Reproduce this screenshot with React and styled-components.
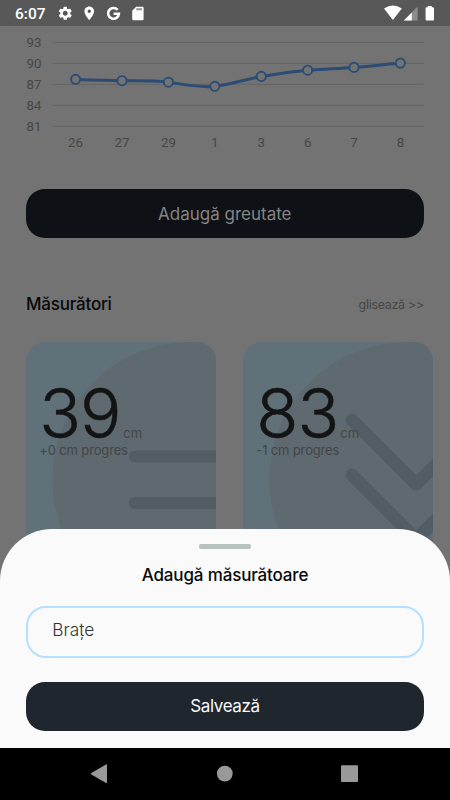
import React from "react";
import { MdLocationOn, MdSettings } from "react-icons/md";
import styled, { createGlobalStyle } from "styled-components";

const weights = [
  { day: "26", x: 75.6, y: 53.3 },
  { day: "27", x: 122, y: 54.7 },
  { day: "29", x: 168.4, y: 56.2 },
  { day: "1", x: 214.8, y: 60.3 },
  { day: "3", x: 261.3, y: 50.4 },
  { day: "6", x: 307.7, y: 44.2 },
  { day: "7", x: 354, y: 41.4 },
  { day: "8", x: 400.4, y: 37.1 },
];

const ticks = [93, 90, 87, 84, 81];

const measurements = [
  { value: "39", progress: "+0 cm progres", trend: "equal" },
  { value: "83", progress: "-1 cm progres", trend: "down" },
];

function StatusBar() {
  return (
    <Status>
      <Clock>6:07</Clock>
      <StatusIcons>
        <MdSettings size={16.5} />
        <MdLocationOn size={16.5} />
        <svg width="15" height="15" viewBox="0 0 15 15">
          <path
            d="M11.6 3.8A5.4 5.4 0 1 0 12.9 7.7H7.6"
            fill="none"
            stroke="#fff"
            strokeWidth="2.6"
          />
        </svg>
        <svg width="12" height="15" viewBox="0 0 12 15">
          <path
            d="M4.2 0.7H10.4Q11.6 0.7 11.6 1.9V13Q11.6 14.2 10.4 14.2H1.4Q0.2 14.2 0.2 13V4.7Z"
            fill="#fff"
          />
          <path d="M4.3 2.2H10V4.3H4.3Z" fill="#969696" />
        </svg>
      </StatusIcons>
      <SystemIcons width="50" height="16" viewBox="0 0 50 16">
        <path d="M0 3.6Q8.9 -2.8 17.8 3.6L8.9 15Z" fill="#fff" />
        <path d="M33.6 1.5V15.5H19.8Z" fill="#8d8d8d" />
        <path d="M27.8 7.4V15.5H19.8Z" fill="#fff" />
        <path
          d="M43.8 1H47.8V2.2H49Q50 2.2 50 3.2V14.5Q50 15.5 49 15.5H42.6Q41.6 15.5 41.6 14.5V3.2Q41.6 2.2 42.6 2.2H43.8Z"
          fill="#fff"
        />
      </SystemIcons>
    </Status>
  );
}

function WeightChart() {
  return (
    <Chart width="450" height="134" viewBox="0 0 450 134">
      {ticks.map((tick, i) => (
        <g key={tick}>
          <line x1="52.5" x2="423.5" y1={16.3 + i * 21} y2={16.3 + i * 21} />
          <text x="34" y={20.6 + i * 21}>
            {tick}
          </text>
        </g>
      ))}
      <path d="M75.6 53.3C91 54.3 106.5 54.4 122 54.7S153 54.2 168.4 56.2S199.4 62 214.8 60.3S245.8 53.2 261.3 50.4S292.2 45.5 307.7 44.2S338.5 42.6 354 41.4S385 38.5 400.4 37.1" />
      {weights.map((item) => (
        <g key={item.day}>
          <circle cx={item.x} cy={item.y} r="4.6" />
          <text x={item.x} y="121.3">
            {item.day}
          </text>
        </g>
      ))}
    </Chart>
  );
}

function MeasureCard({ value, progress, trend }) {
  return (
    <Card>
      <CardArt width="190" height="260" viewBox="0 0 190 260">
        <circle cx="164.5" cy="138" r="138" fill="#5e6a6f" />
        <g
          fill="none"
          stroke="#515d62"
          strokeLinecap="round"
          strokeLinejoin="round"
        >
          {trend === "equal" ? (
            <path d="M108.8 114.5H220M108.8 161H220" strokeWidth="11.8" />
          ) : (
            <path
              d="M109 78L173.2 142.2L237.4 78M109 133L173.2 197.2L237.4 133"
              strokeWidth="12.8"
            />
          )}
        </g>
      </CardArt>
      <Reading>
        <Value>{value}</Value>
        <Unit>cm</Unit>
      </Reading>
      <Progress>{progress}</Progress>
    </Card>
  );
}

function App() {
  return (
    <Phone>
      <GlobalStyle />
      <StatusBar />
      <Screen>
        <WeightChart />
        <AddButton>Adaugă greutate</AddButton>
        <SectionHeader>
          <SectionTitle>Măsurători</SectionTitle>
          <SwipeHint>glisează &gt;&gt;</SwipeHint>
        </SectionHeader>
        <CardRow>
          {measurements.map((item) => (
            <MeasureCard key={item.value} {...item} />
          ))}
        </CardRow>
      </Screen>
      <Sheet>
        <Handle />
        <SheetTitle>Adaugă măsurătoare</SheetTitle>
        <Field type="text" defaultValue="Brațe" />
        <SaveButton>Salvează</SaveButton>
      </Sheet>
      <NavBar>
        <svg width="450" height="52" viewBox="0 0 450 52" fill="#999">
          <path d="M91.3 25L106 16.5Q107 16 107 17V34Q107 35.5 106 34.9L91.3 26.5Q90.5 25.8 91.3 25Z" />
          <circle cx="224.8" cy="25.6" r="7.9" />
          <rect x="341" y="17.3" width="17" height="16.8" rx="1" />
        </svg>
      </NavBar>
    </Phone>
  );
}

export default App;

const GlobalStyle = createGlobalStyle`
  * {
    box-sizing: border-box;
  }
  body {
    margin: 0;
    overflow: hidden;
  }
`;

const Phone = styled.div`
  position: relative;
  display: flex;
  flex-direction: column;
  width: 450px;
  height: 800px;
  overflow: hidden;
  background-color: #737373;
  font-family: Inter, "Open Sans", sans-serif;
`;

const Status = styled.header`
  flex: none;
  display: flex;
  align-items: center;
  height: 26px;
  padding: 0 16px 0 15px;
  color: #fff;
  background-color: #585858;
`;

const Clock = styled.span`
  width: 42px;
  padding-top: 2px;
  font: 500 15.5px/26px Roboto, sans-serif;
`;

const StatusIcons = styled.div`
  display: flex;
  align-items: center;
  gap: 7.8px;
  padding-top: 1px;
  svg:last-child {
    margin-left: 4px;
  }
`;

const SystemIcons = styled.svg`
  margin-left: auto;
`;

const Screen = styled.main`
  flex: 1;
  display: flex;
  flex-direction: column;
  min-height: 0;
  overflow: hidden;
`;

const Chart = styled.svg`
  flex: none;
  line {
    stroke: #636363;
    stroke-width: 1;
  }
  path {
    fill: none;
    stroke: #2b4d75;
    stroke-width: 3;
  }
  circle {
    fill: #737373;
    stroke: #2b4d75;
    stroke-width: 1.9;
  }
  text {
    fill: #464646;
    font: 400 13.3px Roboto, sans-serif;
    text-anchor: middle;
  }
`;

const Button = styled.button`
  flex: none;
  width: 397.5px;
  height: 49px;
  padding: 1px 0 0;
  border: 0;
  border-radius: 19px;
  font-family: inherit;
  font-size: 17px;
  font-weight: 400;
`;

const AddButton = styled(Button)`
  margin: 29px 0 0 26px;
  color: #858585;
  background-color: #0e1115;
`;

const SaveButton = styled(Button)`
  margin-top: 24px;
  padding: 0;
  letter-spacing: -0.35px;
  color: #fafafa;
  background-color: #1f262e;
`;

const SectionHeader = styled.div`
  flex: none;
  display: flex;
  align-items: center;
  justify-content: space-between;
  height: 24px;
  margin: 54px 26px 0;
`;

const SectionTitle = styled.h2`
  margin: 0;
  color: #080808;
  font-size: 17px;
  font-weight: 500;
  letter-spacing: -0.2px;
`;

const SwipeHint = styled.span`
  color: #464646;
  font-size: 12.5px;
  letter-spacing: -0.3px;
`;

const CardRow = styled.div`
  display: flex;
  gap: 27px;
  padding: 26px 0 0 26.3px;
`;

const Card = styled.article`
  position: relative;
  flex: none;
  width: 190px;
  height: 260px;
  padding: 32px 0 0 13px;
  border-radius: 19px;
  overflow: hidden;
  background-color: #60717a;
`;

const CardArt = styled.svg`
  position: absolute;
  top: 0;
  left: 0;
`;

const Reading = styled.div`
  position: relative;
  display: flex;
  align-items: baseline;
  height: 68px;
  line-height: 78px;
`;

const Value = styled.span`
  width: 84px;
  color: #141414;
  font-size: 69px;
  font-weight: 300;
  letter-spacing: -1px;
  -webkit-text-stroke: 0.6px #141414;
`;

const Unit = styled.span`
  color: #464646;
  font-size: 13px;
  line-height: 16px;
`;

const Progress = styled.div`
  position: relative;
  color: #434648;
  font-size: 13px;
  letter-spacing: -0.15px;
  line-height: 17px;
`;

const Sheet = styled.section`
  position: absolute;
  right: 0;
  bottom: 52px;
  left: 0;
  display: flex;
  flex-direction: column;
  align-items: center;
  height: 219.5px;
  border-radius: 52px 52px 0 0;
  background-color: #fafafa;
`;

const Handle = styled.div`
  flex: none;
  width: 52.5px;
  height: 4.5px;
  margin-top: 15.5px;
  border-radius: 2px;
  background-color: #b7c1bd;
`;

const SheetTitle = styled.h2`
  margin: 14.5px 0 0;
  color: #080808;
  font-size: 17px;
  font-weight: 500;
  letter-spacing: -0.15px;
  line-height: 24px;
`;

const Field = styled.input`
  flex: none;
  width: 397.5px;
  height: 52px;
  margin-top: 18.5px;
  padding: 0 25px 4px 24px;
  border: 2px solid #b3e0ff;
  border-radius: 20px;
  outline: none;
  color: #333;
  background-color: transparent;
  font: 300 17.3px Inter, sans-serif;
`;

const NavBar = styled.nav`
  flex: none;
  height: 52px;
  background-color: #000;
`;
